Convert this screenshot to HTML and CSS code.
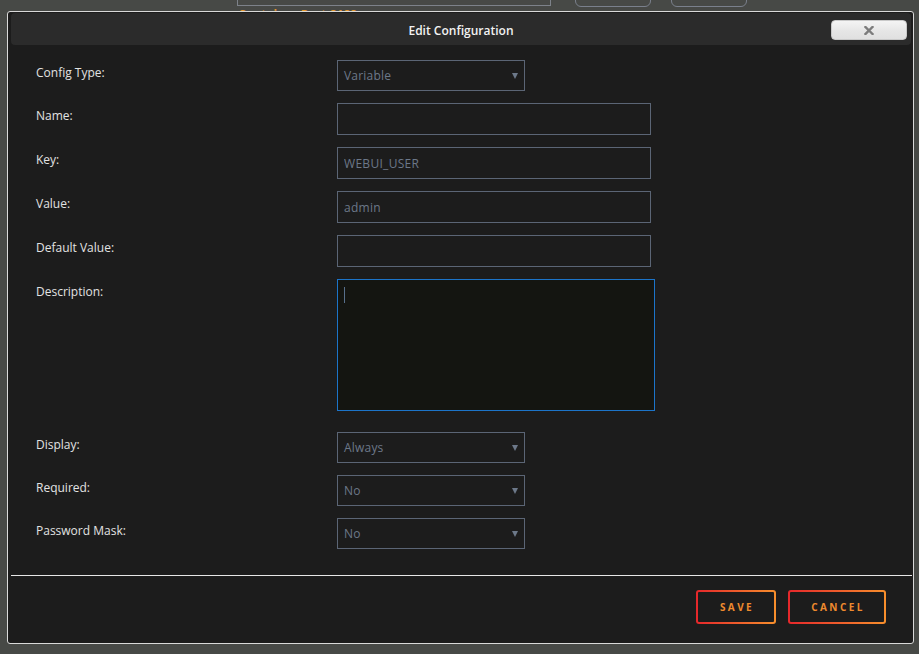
FILE: index.html
```html
<!DOCTYPE html>
<html lang="en">
<head>
<meta charset="utf-8">
<title>Edit Configuration</title>
<link rel="stylesheet" href="styles.css">
</head>
<body>
<div class="backdrop">
  <div class="bg-col">
    <div class="bg-input"></div>
    <div class="bg-note">Container Port:8189</div>
  </div>
  <div class="bg-btn"></div>
  <div class="bg-btn"></div>
</div>

<div class="modal">
  <div class="modal-header">
    <span></span>
    <h1 class="modal-title">Edit Configuration</h1>
    <button class="close-btn" type="button" aria-label="Close">
      <svg width="10" height="9" viewBox="0 0 10 9"><path d="M1.5 1 L8.5 8 M8.5 1 L1.5 8" stroke="#7c7c7c" stroke-width="2.4" stroke-linecap="square"/></svg>
    </button>
  </div>

  <form class="modal-body">
    <div class="row">
      <label class="lbl">Config Type:</label>
      <div class="select sel-short"><span>Variable</span><i class="caret"></i></div>
    </div>
    <div class="row">
      <label class="lbl">Name:</label>
      <input class="txt" type="text" value="">
    </div>
    <div class="row">
      <label class="lbl">Key:</label>
      <input class="txt" type="text" value="WEBUI_USER">
    </div>
    <div class="row">
      <label class="lbl">Value:</label>
      <input class="txt" type="text" value="admin">
    </div>
    <div class="row">
      <label class="lbl">Default Value:</label>
      <input class="txt" type="text" value="">
    </div>
    <div class="row row-desc">
      <label class="lbl">Description:</label>
      <div class="area-wrap"><textarea class="area"></textarea><span class="text-caret"></span></div>
    </div>
    <div class="row">
      <label class="lbl">Display:</label>
      <div class="select sel-short"><span>Always</span><i class="caret"></i></div>
    </div>
    <div class="row">
      <label class="lbl">Required:</label>
      <div class="select sel-short"><span>No</span><i class="caret"></i></div>
    </div>
    <div class="row">
      <label class="lbl">Password Mask:</label>
      <div class="select sel-short"><span>No</span><i class="caret"></i></div>
    </div>
  </form>

  <div class="modal-footer">
    <div class="rule"></div>
    <div class="actions">
      <button class="gbtn btn-save" type="button">SAVE</button>
      <button class="gbtn btn-cancel" type="button">CANCEL</button>
    </div>
  </div>
</div>
</body>
</html>
```

FILE: styles.css
```css
* { box-sizing: border-box; }
html, body { margin: 0; padding: 0; }
body {
  width: 919px;
  height: 654px;
  overflow: hidden;
  background: #474946;
  font-family: "Open Sans", "Noto Sans", sans-serif;
  font-size: 12px;
  position: relative;
}

/* page behind the modal */
.backdrop {
  display: flex;
  align-items: flex-start;
  padding-left: 237px;
  margin-top: -22px;
}
.bg-col { display: flex; flex-direction: column; }
.bg-input {
  width: 314px;
  height: 28px;
  border: 1px solid #7d828a;
}
.bg-note {
  margin-top: 2px;
  color: #e89a2c;
  font-size: 12px;
  font-weight: 700;
  line-height: 14px;
  padding-left: 1px;
}
.bg-btn {
  width: 76px;
  height: 29px;
  border: 1px solid #7a808c;
  border-radius: 6px;
  margin-left: 24px;
}
.bg-btn + .bg-btn { margin-left: 20px; }

/* modal */
.modal {
  position: absolute;
  left: 7px;
  top: 11px;
  width: 907px;
  height: 633px;
  background: #1c1c1c;
  border: 1px solid #d9d9d9;
  border-radius: 3px;
  display: flex;
  flex-direction: column;
}
.modal-header {
  margin: 1px 2px 0 3px;
  height: 32px;
  background: #2b2b2b;
  border-radius: 4px;
  display: grid;
  grid-template-columns: 1fr auto 1fr;
  align-items: center;
}
.modal-title {
  margin: 0;
  font-size: 12px;
  font-weight: 600;
  color: #f2f2f2;
  line-height: 16px;
  padding-top: 3px;
  padding-left: 0;
}
.close-btn {
  justify-self: end;
  align-self: start;
  margin-top: 7px;
  margin-right: 4px;
  width: 76px;
  height: 20px;
  padding: 0;
  border: 1px solid #c9c9c9;
  border-radius: 4px;
  background: linear-gradient(#f4f4f4, #e6e6e6 55%, #e0e0e0);
  display: flex;
  align-items: center;
  justify-content: center;
}
.close-btn svg { display: block; margin-left: 0; }

.modal-body {
  flex: 1;
  padding: 15px 0 0 27px;
  display: flex;
  flex-direction: column;
  gap: 12px;
  margin: 0;
}
.row {
  display: flex;
  align-items: flex-start;
}
.row-desc { margin-bottom: 9px; }
.lbl {
  width: 302px;
  flex: none;
  color: #e2e2e2;
  font-size: 12px;
  line-height: 16px;
  padding-top: 5px;
  padding-left: 1px;
}
.txt {
  width: 314px;
  height: 32px;
  margin: 0;
  padding: 0 6px;
  background: transparent;
  border: 1px solid #5b6575;
  color: #6c7889;
  font-family: "Open Sans", "Noto Sans", sans-serif;
  font-size: 12px;
  letter-spacing: 0.3px;
  outline: none;
}
.select {
  position: relative;
  width: 188px;
  height: 31px;
  border: 1px solid #5b6575;
  color: #6c7889;
  display: flex;
  align-items: center;
  padding: 0 6px;
  font-size: 12px;
  letter-spacing: 0.2px;
}
.caret {
  position: absolute;
  right: 6px;
  top: 12px;
  width: 0;
  height: 0;
  border-left: 3px solid transparent;
  border-right: 3px solid transparent;
  border-top: 6px solid #6c7889;
}
.area-wrap {
  position: relative;
  width: 318px;
  height: 132px;
}
.area {
  display: block;
  width: 318px;
  height: 132px;
  margin: 0;
  background: #141511;
  border: 1px solid #1c74c9;
  resize: none;
  outline: none;
}
.text-caret {
  position: absolute;
  left: 7px;
  top: 8px;
  width: 1px;
  height: 16px;
  background: #58708c;
}

.modal-footer {
  height: 68px;
  display: flex;
  flex-direction: column;
}
.rule {
  height: 1px;
  background: #e6e6e6;
  margin: 0 1px 0 3px;
}
.actions {
  display: flex;
  justify-content: flex-end;
  gap: 12px;
  padding: 14px 27px 0 0;
}
.gbtn {
  height: 34px;
  padding: 0;
  border: 2px solid transparent;
  border-radius: 3px;
  background:
    linear-gradient(#1c1c1c, #1c1c1c) padding-box,
    linear-gradient(90deg, #e5272b, #f78f2c) border-box;
  color: #ee8a2e;
  font-family: "Open Sans", "Noto Sans", sans-serif;
  font-size: 10px;
  font-weight: 700;
  letter-spacing: 2.4px;
  text-indent: 2px;
}
.btn-save { width: 80px; }
.btn-cancel { width: 98px; }
```
